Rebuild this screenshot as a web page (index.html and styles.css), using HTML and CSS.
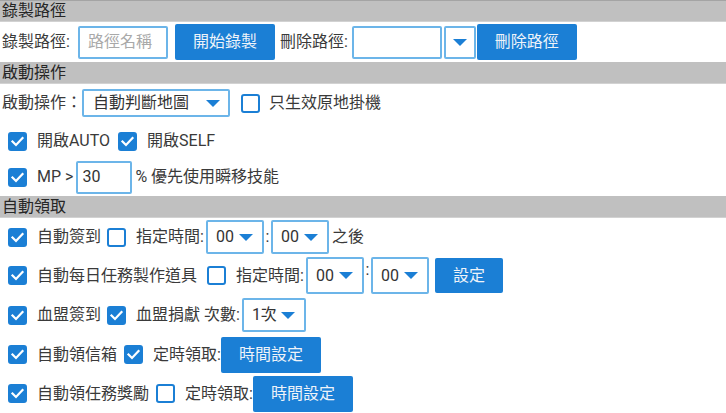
FILE: index.html
```html
<!DOCTYPE html>
<html lang="zh-Hant">
<head>
<meta charset="utf-8">
<link rel="stylesheet" href="styles.css">
</head>
<body>
<div class="hdr first">錄製路徑</div>
<div class="row r-rec">
  <span class="lbl">錄製路徑:</span>
  <div class="field w90 ml8 ph">路徑名稱</div>
  <button class="btn w100 ml7">開始錄製</button>
  <span class="lbl ml5">刪除路徑:</span>
  <div class="field w90 ml4"></div>
  <div class="field ddbox ml2"><i class="tri"></i></div>
  <button class="btn w100 ml1">刪除路徑</button>
</div>

<div class="hdr">啟動操作</div>
<div class="row r-a">
  <span class="lbl">啟動操作：</span>
  <div class="field sel-main"><span>自動判斷地圖</span><i class="tri"></i></div>
  <span class="cb ml11"></span>
  <span class="lbl ml9">只生效原地掛機</span>
</div>
<div class="row r-b ind">
  <span class="cb on"><svg viewBox="0 0 19 19"><polyline points="4.5,9.5 8,13 14.5,6"/></svg></span>
  <span class="lbl ml10">開啟AUTO</span>
  <span class="cb on ml8"><svg viewBox="0 0 19 19"><polyline points="4.5,9.5 8,13 14.5,6"/></svg></span>
  <span class="lbl ml10">開啟SELF</span>
</div>
<div class="row r-c ind">
  <span class="cb on"><svg viewBox="0 0 19 19"><polyline points="4.5,9.5 8,13 14.5,6"/></svg></span>
  <span class="lbl ml10">MP &gt;</span>
  <div class="field mp ml3">30</div>
  <span class="lbl ml3">% 優先使用瞬移技能</span>
</div>

<div class="hdr">自動領取</div>
<div class="row r1 ind">
  <span class="cb on"><svg viewBox="0 0 19 19"><polyline points="4.5,9.5 8,13 14.5,6"/></svg></span>
  <span class="lbl ml10">自動簽到</span>
  <span class="cb ml6"></span>
  <span class="lbl ml10">指定時間:</span>
  <div class="field sel ml2"><span>00</span><i class="tri"></i></div>
  <span class="lbl colon">:</span>
  <div class="field sel"><span>00</span><i class="tri"></i></div>
  <span class="lbl ml3">之後</span>
</div>
<div class="row r2 ind">
  <span class="cb on"><svg viewBox="0 0 19 19"><polyline points="4.5,9.5 8,13 14.5,6"/></svg></span>
  <span class="lbl ml10">自動每日任務製作道具</span>
  <span class="cb ml10"></span>
  <span class="lbl ml10">指定時間:</span>
  <div class="field sel tall ml2"><span>00</span><i class="tri"></i></div>
  <span class="lbl colon up">:</span>
  <div class="field sel tall"><span>00</span><i class="tri"></i></div>
  <button class="btn w68 ml6">設定</button>
</div>
<div class="row r3 ind">
  <span class="cb on"><svg viewBox="0 0 19 19"><polyline points="4.5,9.5 8,13 14.5,6"/></svg></span>
  <span class="lbl ml10">血盟簽到</span>
  <span class="cb on ml6"><svg viewBox="0 0 19 19"><polyline points="4.5,9.5 8,13 14.5,6"/></svg></span>
  <span class="lbl ml10">血盟捐獻 次數:</span>
  <div class="field sel cnt ml2"><span>1次</span><i class="tri"></i></div>
</div>
<div class="row r4 ind">
  <span class="cb on"><svg viewBox="0 0 19 19"><polyline points="4.5,9.5 8,13 14.5,6"/></svg></span>
  <span class="lbl ml10">自動領信箱</span>
  <span class="cb on ml7"><svg viewBox="0 0 19 19"><polyline points="4.5,9.5 8,13 14.5,6"/></svg></span>
  <span class="lbl ml10">定時領取:</span>
  <button class="btn w100">時間設定</button>
</div>
<div class="row r5 ind">
  <span class="cb on"><svg viewBox="0 0 19 19"><polyline points="4.5,9.5 8,13 14.5,6"/></svg></span>
  <span class="lbl ml10">自動領任務獎勵</span>
  <span class="cb ml7"></span>
  <span class="lbl ml10">定時領取:</span>
  <button class="btn w100">時間設定</button>
</div>
</body>
</html>
```

FILE: styles.css
```css
* { box-sizing: border-box; }
html, body { margin: 0; padding: 0; }
body {
  width: 726px;
  height: 413px;
  overflow: hidden;
  background: #ffffff;
  color: #3a3a3a;
  font-family: Roboto, "Noto Sans CJK TC", sans-serif;
  font-size: 16px;
  line-height: 1;
}
.hdr {
  height: 22px;
  line-height: 21px;
  background: #c0c0c0;
  color: #262626;
  padding-left: 2px;
  font-size: 16px;
  border-bottom: 1px solid #d2d2d2;
}
.hdr.first { border-top: 1px solid #a4a4a4; line-height: 20px; }
.row {
  display: flex;
  align-items: center;
  padding-left: 2px;
  white-space: nowrap;
}
.row.ind { padding-left: 8px; }
.r-rec { height: 40px; }
.r-a { height: 38px; }
.r-b { height: 38px; }
.r-c { height: 34px; margin-bottom: 2px; }
.r1 { height: 38px; }
.r2 { height: 39px; }
.r3 { height: 40px; }
.r4 { height: 39px; }
.r5 { height: 39px; }

.lbl { display: inline-block; flex: none; }
.field {
  flex: none;
  display: flex;
  align-items: center;
  height: 33px;
  border: 2px solid #6cb5e9;
  border-radius: 2px;
  background: #fff;
  padding-left: 8px;
  color: #333;
}
.field.ph { color: #a9a9a9; }
.w90 { width: 90px; }
.ddbox { width: 32px; justify-content: center; padding-left: 0; }
.sel-main {
  width: 148px;
  height: 28px;
  padding-left: 9px;
  padding-right: 8px;
  justify-content: space-between;
}
.mp { width: 56px; padding-left: 4px; }
.sel {
  width: 58px;
  height: 34px;
  padding-left: 8px;
  padding-right: 9px;
  justify-content: space-between;
}
.sel.tall { height: 37px; }
.sel.cnt { width: 64px; height: 34px; }
.tri {
  display: block;
  width: 0;
  height: 0;
  border-left: 7px solid transparent;
  border-right: 7px solid transparent;
  border-top: 7px solid #1b7fd5;
}
.colon { width: 7px; text-align: center; }
.colon.up { align-self: flex-start; margin-top: 6px; }

.btn {
  flex: none;
  display: flex;
  align-items: center;
  justify-content: center;
  height: 36px;
  padding: 0;
  border: none;
  border-radius: 2px;
  background: #1b7fd5;
  color: #eef3f9;
  font: inherit;
  font-size: 16px;
}
.w100 { width: 100px; }
.w68 { width: 68px; height: 35px; }

.cb {
  flex: none;
  display: inline-block;
  width: 19px;
  height: 19px;
  border: 2px solid #1b7fd5;
  border-radius: 3px;
  background: #fff;
}
.cb.on { background: #1b7fd5; border-color: #1b7fd5; }
.cb svg {
  display: block;
  width: 19px;
  height: 19px;
  margin: -2px;
}
.cb polyline {
  fill: none;
  stroke: #ffffff;
  stroke-width: 2.2;
  stroke-linecap: square;
  stroke-linejoin: miter;
}

.ml1 { margin-left: 1px; }
.ml2 { margin-left: 2px; }
.ml3 { margin-left: 3px; }
.ml4 { margin-left: 4px; }
.ml5 { margin-left: 5px; }
.ml6 { margin-left: 6px; }
.ml7 { margin-left: 7px; }
.ml8 { margin-left: 8px; }
.ml9 { margin-left: 9px; }
.ml10 { margin-left: 10px; }
.ml11 { margin-left: 11px; }
```
